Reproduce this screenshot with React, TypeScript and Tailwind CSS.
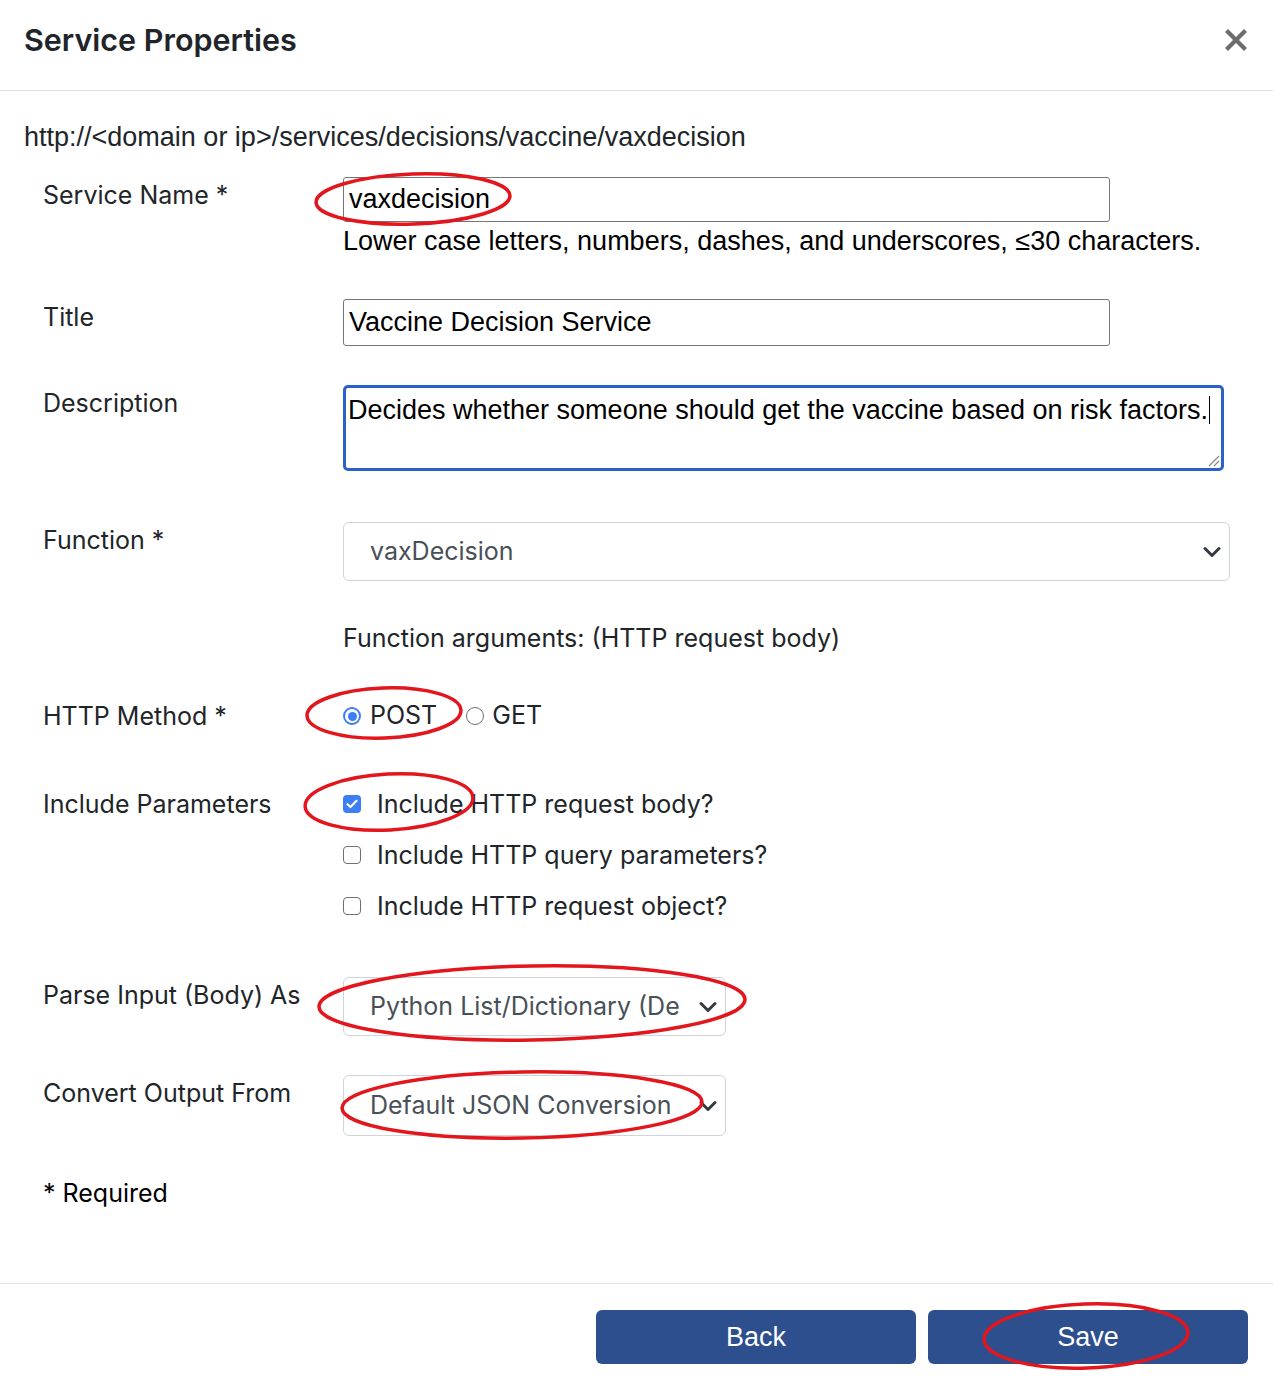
import React from 'react';

const sans = { fontFamily: 'Inter, "Noto Sans", sans-serif' };
const helv = { fontFamily: '"Liberation Sans", Arial, sans-serif' };

function Chevron() {
  return (
    <svg width="18" height="12" viewBox="0 0 18 12" className="shrink-0">
      <path d="M2 2.5 L9 9.5 L16 2.5" fill="none" stroke="#343a40" strokeWidth="3" strokeLinecap="round" strokeLinejoin="round" />
    </svg>
  );
}

function Checkbox({ checked }: { checked?: boolean }) {
  if (checked) {
    return (
      <span className="flex h-[18px] w-[18px] shrink-0 items-center justify-center rounded-[4px] bg-[#3b7ef6]">
        <svg width="12" height="10" viewBox="0 0 12 10">
          <path d="M1.5 5.2 L4.5 8 L10.5 1.8" fill="none" stroke="white" strokeWidth="2.2" strokeLinecap="round" strokeLinejoin="round" />
        </svg>
      </span>
    );
  }
  return <span className="block h-[18px] w-[18px] shrink-0 rounded-[4px] border-[1.5px] border-[#6f6f6f] bg-white" />;
}

function Radio({ checked }: { checked?: boolean }) {
  if (checked) {
    return (
      <span className="flex h-[18px] w-[18px] shrink-0 items-center justify-center rounded-full border-[2px] border-[#3b7ef6] bg-white">
        <span className="block h-[9px] w-[9px] rounded-full bg-[#3b7ef6]" />
      </span>
    );
  }
  return <span className="block h-[18px] w-[18px] shrink-0 rounded-full border-[1.5px] border-[#6f6f6f] bg-white" />;
}

function Row({ label, children, className = '' }: { label: string; children: React.ReactNode; className?: string }) {
  return (
    <div className={`flex pl-[19px] ${className}`}>
      <div className="w-[300px] shrink-0 text-[25px] leading-[36px] text-[#212529]" style={sans}>
        {label}
      </div>
      <div className="min-w-0 flex-1">{children}</div>
    </div>
  );
}

function Select({ value, width, height, gap = 'mr-0' }: { value: string; width: string; height: string; gap?: string }) {
  return (
    <div
      className={`flex items-center rounded-[6px] border border-[#ced4da] bg-white pl-[26px] pr-[8px] ${width} ${height}`}
      style={sans}
    >
      <span className={`flex-1 overflow-hidden whitespace-nowrap text-[25px] text-[#495057] ${gap}`}>{value}</span>
      <Chevron />
    </div>
  );
}

export default function App() {
  return (
    <div className="relative h-[1380px] w-[1273px] overflow-hidden bg-white text-[#212529]">
      {/* Header */}
      <div className="flex h-[91px] items-center justify-between border-b border-[#dee2e6] pl-6 pr-[26px]">
        <h1 className="pb-[11px] text-[30.5px] font-semibold text-[#212529]" style={sans}>
          Service Properties
        </h1>
        <svg width="22" height="22" viewBox="0 0 22 22" className="mb-[11px]">
          <path d="M3 3 L19 19 M19 3 L3 19" stroke="#6c6c6c" strokeWidth="4.2" strokeLinecap="square" />
        </svg>
      </div>

      {/* Body */}
      <div className="px-6 pt-[28px]">
        <div className="text-[27px] leading-[36px] text-[#212529]" style={helv}>
          http://&lt;domain or ip&gt;/services/decisions/vaccine/vaxdecision
        </div>

        <Row label="Service Name *" className="mt-[22px]">
          <div className="flex h-[45px] w-[767px] items-center rounded-[3px] border-[1.5px] border-[#767676] px-[5px] text-[27px] text-black" style={helv}>
            vaxdecision
          </div>
          <div className="mt-[1px] text-[27px] leading-[36px] text-black" style={helv}>
            Lower case letters, numbers, dashes, and underscores, ≤30 characters.
          </div>
        </Row>

        <Row label="Title" className="mt-[40px]">
          <div className="flex h-[47px] w-[767px] items-center rounded-[3px] border-[1.5px] border-[#767676] px-[5px] text-[27px] text-black" style={helv}>
            Vaccine Decision Service
          </div>
        </Row>

        <Row label="Description" className="mt-[39px]">
          <div className="relative h-[86px] w-[881px] rounded-[5px] border-[3px] border-[#2a62c9] pl-[2px] pt-[3px] text-[27px] leading-[32px] text-black" style={helv}>
            Decides whether someone should get the vaccine based on risk factors.
            <span className="ml-[1px] inline-block h-[28px] w-[1.5px] translate-y-[5px] bg-black" />
            <svg width="14" height="14" viewBox="0 0 14 14" className="absolute bottom-[1px] right-[1px]">
              <path d="M13 3 L3 13 M13 8 L8 13" stroke="#8a8a8a" strokeWidth="1.3" />
            </svg>
          </div>
        </Row>

        <Row label="Function *" className="mt-[51px]">
          <Select value="vaxDecision" width="w-[887px]" height="h-[59px]" />
        </Row>

        <div className="mt-[39px] pl-[319px] text-[25px] leading-[36px] text-[#212529]" style={sans}>
          Function arguments: (HTTP request body)
        </div>

        <Row label="HTTP Method *" className="mt-[42px]">
          <div className="flex h-[36px] items-center text-[25px] text-[#212529]" style={sans}>
            <Radio checked />
            <span className="ml-[9px]">POST</span>
            <span className="ml-[29px] flex items-center">
              <Radio />
            </span>
            <span className="ml-[8px]">GET</span>
          </div>
        </Row>

        <Row label="Include Parameters" className="mt-[52px]">
          <div className="flex flex-col gap-[15px] text-[25px] leading-[36px] text-[#212529]" style={sans}>
            <div className="flex items-center">
              <Checkbox checked />
              <span className="ml-[16px]">Include HTTP request body?</span>
            </div>
            <div className="flex items-center">
              <Checkbox />
              <span className="ml-[16px]">Include HTTP query parameters?</span>
            </div>
            <div className="flex items-center">
              <Checkbox />
              <span className="ml-[16px]">Include HTTP request object?</span>
            </div>
          </div>
        </Row>

        <Row label="Parse Input (Body) As" className="mt-[53px]">
          <Select value="Python List/Dictionary (Default)" width="w-[383px]" height="h-[59px]" gap="mr-[20px]" />
        </Row>

        <Row label="Convert Output From" className="mt-[39px]">
          <Select value="Default JSON Conversion" width="w-[383px]" height="h-[61px]" />
        </Row>

        <div className="mt-[39px] pl-[19px] text-[25px] leading-[36px] text-black" style={sans}>
          * Required
        </div>
      </div>

      {/* Footer */}
      <div className="mt-[72px] flex justify-end gap-[12px] border-t border-[#dee2e6] pr-[25px] pt-[26px]">
        <button className="h-[54px] w-[320px] rounded-[6px] bg-[#2e4f8e] text-[27px] text-white" style={helv}>
          Back
        </button>
        <button className="h-[54px] w-[320px] rounded-[6px] bg-[#2e4f8e] text-[27px] text-white" style={helv}>
          Save
        </button>
      </div>

      {/* Red annotation ellipses */}
      <svg className="pointer-events-none absolute inset-0" width="1273" height="1380" viewBox="0 0 1273 1380">
        <g fill="none" stroke="#e3151d" strokeWidth="3.5">
          <ellipse cx="413" cy="199" rx="97" ry="25" transform="rotate(-2 413 199)" />
          <ellipse cx="384" cy="713" rx="77" ry="25" transform="rotate(-2 384 713)" />
          <ellipse cx="389" cy="802" rx="84" ry="28" transform="rotate(-3 389 802)" />
          <ellipse cx="532" cy="1003" rx="213" ry="37" transform="rotate(-1 532 1003)" />
          <ellipse cx="522" cy="1105" rx="180" ry="33" transform="rotate(-1 522 1105)" />
          <ellipse cx="1086" cy="1336" rx="102" ry="32" transform="rotate(-2 1086 1336)" />
        </g>
      </svg>
    </div>
  );
}
